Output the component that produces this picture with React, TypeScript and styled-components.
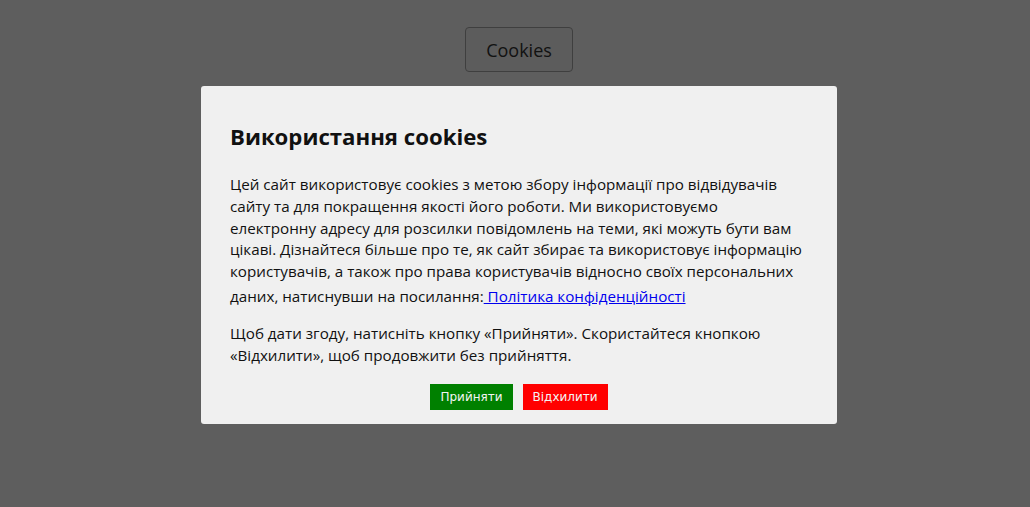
import React from "react";
import styled, { createGlobalStyle } from "styled-components";

const Global = createGlobalStyle`
  html, body { margin: 0; padding: 0; background: #ffffff; }
  body { font-family: "Open Sans", "Noto Sans", sans-serif; }
`;

const Page = styled.div`
  position: relative;
  width: 1030px;
  height: 507px;
  display: flex;
  justify-content: center;
  padding: 27px 0 0 8px;
  box-sizing: border-box;
`;

const OpenButton = styled.button`
  height: 45px;
  padding: 0 20px;
  font-family: "Open Sans", "Noto Sans", sans-serif;
  font-size: 18px;
  color: #333333;
  background: #f8f8f8;
  border: 1px solid #aaaaaa;
  border-radius: 4px;
`;

const Overlay = styled.div`
  position: absolute;
  inset: 0;
  background: rgba(0, 0, 0, 0.63);
  display: flex;
  justify-content: center;
  align-items: flex-start;
  padding: 86px 0 0 8px;
`;

const Modal = styled.div`
  width: 636px;
  box-sizing: border-box;
  background: #f0f0f0;
  border-radius: 3px;
  padding: 22px 33px 14px 29px;
  color: #111111;
  font-family: "Open Sans", "Noto Sans", sans-serif;
`;

const Title = styled.h2`
  margin: 14px 0 22px;
  font-size: 22.2px;
  font-weight: 700;
  line-height: 30px;
`;

const Text = styled.p<{ $last?: boolean }>`
  margin: 0 0 ${(p) => (p.$last ? "0" : "13.5px")};
  font-size: 15.2px;
  line-height: 21.8px;
`;

const Link = styled.a`
  color: #0000ee;
  text-decoration: underline;
  line-height: 26.5px;
`;

const Actions = styled.div`
  display: flex;
  justify-content: center;
  gap: 10px;
  margin: 17px 0 0 4px;
`;

const ActionButton = styled.button<{ $tone: string }>`
  height: 26px;
  padding: 0 10px;
  border: none;
  border-radius: 0;
  background: ${(p) => p.$tone};
  color: #f4f4f4;
  font-family: "DejaVu Sans", sans-serif;
  font-size: 12px;
`;

export default function App() {
  return (
    <>
      <Global />
      <Page>
        <OpenButton>Cookies</OpenButton>
        <Overlay>
          <Modal>
            <Title>Використання cookies</Title>
            <Text>
              Цей сайт використовує cookies з метою збору інформації про відвідувачів сайту та для
              покращення якості його роботи. Ми використовуємо електронну адресу для розсилки
              повідомлень на теми, які можуть бути вам цікаві. Дізнайтеся більше про те, як сайт
              збирає та використовує інформацію користувачів, а також про права користувачів
              відносно своїх персональних даних, натиснувши на посилання:
              <Link href="#"> Політика конфіденційності</Link>
            </Text>
            <Text $last>
              Щоб дати згоду, натисніть кнопку «Прийняти». Скористайтеся кнопкою «Відхилити», щоб
              продовжити без прийняття.
            </Text>
            <Actions>
              <ActionButton $tone="#008000">Прийняти</ActionButton>
              <ActionButton $tone="#ff0000">Відхилити</ActionButton>
            </Actions>
          </Modal>
        </Overlay>
      </Page>
    </>
  );
}
